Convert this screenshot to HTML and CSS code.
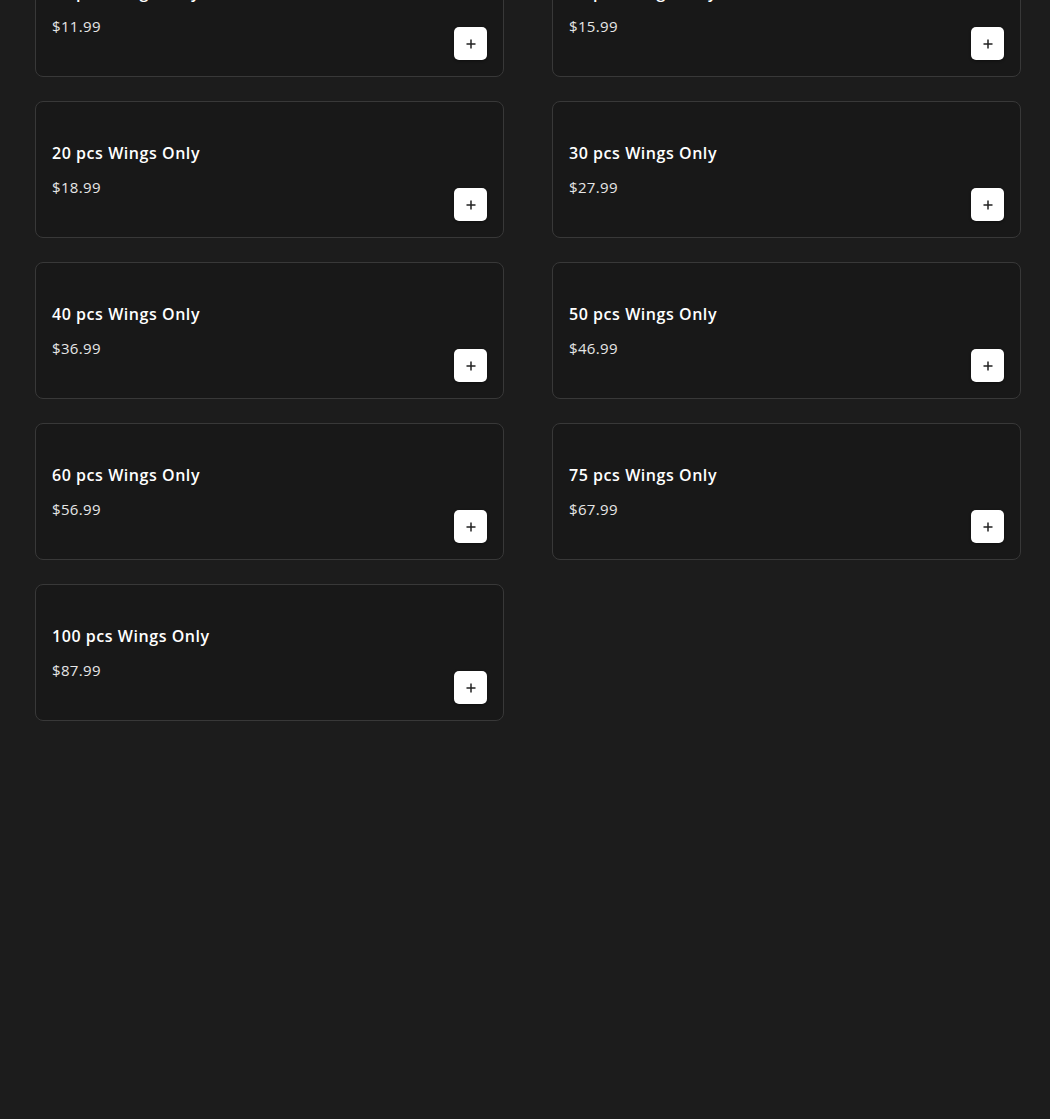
FILE: index.html
```html
<!DOCTYPE html>
<html lang="en">
<head>
    <meta charset="UTF-8">
    <meta name="viewport" content="width=device-width, initial-scale=1.0">
    <title>Wings Menu</title>
    <link rel="stylesheet" href="styles.css">
</head>
<body>
    <!-- Menu items (list is scrolled, first row partly hidden) -->
    <div class="menu-grid">
        <div class="item">
            <div class="item-info">
                <h3 class="item-name">10 pcs Wings Only</h3>
                <p class="item-price">$11.99</p>
            </div>
            <button class="add-btn" aria-label="Add"><svg viewBox="0 0 10 10"><path d="M5 0.5v9M0.5 5h9"/></svg></button>
        </div>
        <div class="item">
            <div class="item-info">
                <h3 class="item-name">15 pcs Wings Only</h3>
                <p class="item-price">$15.99</p>
            </div>
            <button class="add-btn" aria-label="Add"><svg viewBox="0 0 10 10"><path d="M5 0.5v9M0.5 5h9"/></svg></button>
        </div>
        <div class="item">
            <div class="item-info">
                <h3 class="item-name">20 pcs Wings Only</h3>
                <p class="item-price">$18.99</p>
            </div>
            <button class="add-btn" aria-label="Add"><svg viewBox="0 0 10 10"><path d="M5 0.5v9M0.5 5h9"/></svg></button>
        </div>
        <div class="item">
            <div class="item-info">
                <h3 class="item-name">30 pcs Wings Only</h3>
                <p class="item-price">$27.99</p>
            </div>
            <button class="add-btn" aria-label="Add"><svg viewBox="0 0 10 10"><path d="M5 0.5v9M0.5 5h9"/></svg></button>
        </div>
        <div class="item">
            <div class="item-info">
                <h3 class="item-name">40 pcs Wings Only</h3>
                <p class="item-price">$36.99</p>
            </div>
            <button class="add-btn" aria-label="Add"><svg viewBox="0 0 10 10"><path d="M5 0.5v9M0.5 5h9"/></svg></button>
        </div>
        <div class="item">
            <div class="item-info">
                <h3 class="item-name">50 pcs Wings Only</h3>
                <p class="item-price">$46.99</p>
            </div>
            <button class="add-btn" aria-label="Add"><svg viewBox="0 0 10 10"><path d="M5 0.5v9M0.5 5h9"/></svg></button>
        </div>
        <div class="item">
            <div class="item-info">
                <h3 class="item-name">60 pcs Wings Only</h3>
                <p class="item-price">$56.99</p>
            </div>
            <button class="add-btn" aria-label="Add"><svg viewBox="0 0 10 10"><path d="M5 0.5v9M0.5 5h9"/></svg></button>
        </div>
        <div class="item">
            <div class="item-info">
                <h3 class="item-name">75 pcs Wings Only</h3>
                <p class="item-price">$67.99</p>
            </div>
            <button class="add-btn" aria-label="Add"><svg viewBox="0 0 10 10"><path d="M5 0.5v9M0.5 5h9"/></svg></button>
        </div>
        <div class="item">
            <div class="item-info">
                <h3 class="item-name">100 pcs Wings Only</h3>
                <p class="item-price">$87.99</p>
            </div>
            <button class="add-btn" aria-label="Add"><svg viewBox="0 0 10 10"><path d="M5 0.5v9M0.5 5h9"/></svg></button>
        </div>
    </div>
</body>
</html>
```

FILE: styles.css
```css
/* Page */
body {
    margin: 0;
    background-color: #1c1c1c;
    color: #fff;
    font-family: "Open Sans", "Liberation Sans", sans-serif;
}

/* Menu grid */
.menu-grid {
    display: grid;
    grid-template-columns: 1fr 1fr;
    column-gap: 48px;
    row-gap: 24px;
    padding: 0 29px 0 35px;
    margin-top: -60px;
}

/* Menu item card */
.item {
    display: flex;
    justify-content: space-between;
    align-items: flex-end;
    height: 137px;
    box-sizing: border-box;
    padding: 16px;
    background-color: #181818;
    border: 1px solid #383838;
    border-radius: 8px;
}

.item-info {
    align-self: flex-start;
    margin-top: 23px;
}

.item-name {
    margin: 0;
    font-size: 16px;
    font-weight: 600;
    line-height: 24px;
    letter-spacing: 0.55px;
}

.item-price {
    margin: 11px 0 0;
    font-size: 15px;
    line-height: 22px;
    letter-spacing: 0.35px;
    color: #e6e6e6;
}

/* Add button */
.add-btn {
    display: flex;
    align-items: center;
    justify-content: center;
    width: 33px;
    height: 33px;
    padding: 0;
    background-color: #fff;
    border: none;
    border-radius: 5px;
    box-shadow: 0 1px 3px rgba(0, 0, 0, 0.4);
    cursor: pointer;
}

.add-btn svg {
    width: 10px;
    height: 10px;
    fill: none;
    stroke: #222;
    stroke-width: 1.5;
}
```
